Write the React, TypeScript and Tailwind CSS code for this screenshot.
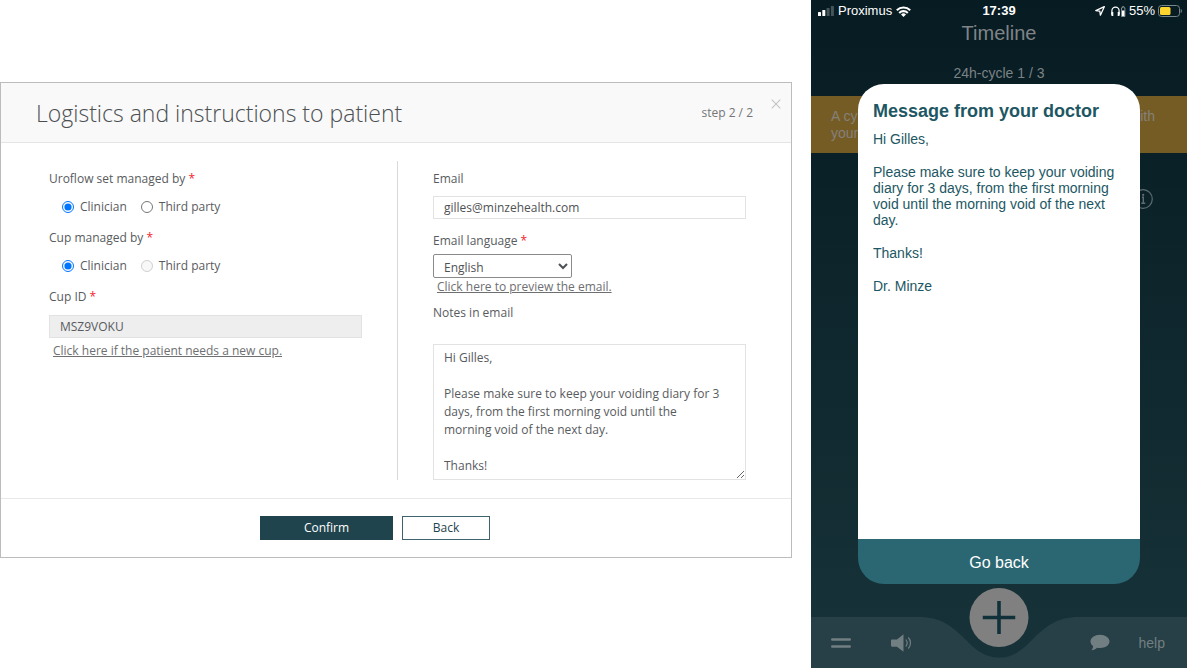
import { useState } from "react";
import type { ReactNode } from "react";

const NOTE = `Hi Gilles,

Please make sure to keep your voiding diary for 3 days, from the first morning void until the morning void of the next day.

Thanks!`;

const MESSAGE = [
  "Hi Gilles,",
  "Please make sure to keep your voiding diary for 3 days, from the first morning void until the morning void of the next day.",
  "Thanks!",
  "Dr. Minze",
];

function Required() {
  return <span className="text-[#f5222d]">*</span>;
}

function RadioRow({
  legend,
  name,
  thirdPartyDisabled = false,
}: {
  legend: string;
  name: string;
  thirdPartyDisabled?: boolean;
}) {
  return (
    <fieldset className="mb-[13px]">
      <legend>
        {legend} <Required />
      </legend>
      <div className="mt-[10px] flex gap-[14px] pl-[13px]">
        <label className="flex items-center gap-[6px]">
          <input type="radio" name={name} defaultChecked className="h-[12px] w-[12px]" />
          Clinician
        </label>
        <label className="flex items-center gap-[6px]">
          <input type="radio" name={name} disabled={thirdPartyDisabled} className="h-[12px] w-[12px]" />
          Third party
        </label>
      </div>
    </fieldset>
  );
}

function TextLink({ children }: { children: ReactNode }) {
  return (
    <a href="#" className="block pl-[4px] text-[#6d6f71] underline">
      {children}
    </a>
  );
}

function LogisticsDialog() {
  const [note, setNote] = useState(NOTE);

  return (
    <section className="mt-[82px] border border-[#bcbcbc] bg-white text-[12px] leading-[18px] text-[#585b5e]">
      {/* Header */}
      <header className="relative flex h-[60px] items-center justify-between border-b border-[#e4e4e4] bg-[#f9f9f9] pl-[35px] pr-[38px]">
        <h1 className="text-[23px] font-light leading-[32px] text-[#4c4f51]">
          Logistics and instructions to patient
        </h1>
        <span className="text-[#747678]">step 2 / 2</span>
        <button aria-label="Close" className="absolute right-[10px] top-[16px]">
          <svg viewBox="0 0 10 10" className="h-[10px] w-[10px]" stroke="#c4c4c4" strokeWidth="1.1">
            <path d="M.7.7l8.6 8.6M9.3.7L.7 9.3" />
          </svg>
        </button>
      </header>

      {/* Form */}
      <div className="grid grid-cols-[397fr_393fr] py-[18px]">
        <div className="border-r border-[#d9d9d9] pl-[48px] pr-[35px] pt-[9px]">
          <RadioRow legend="Uroflow set managed by" name="uroflow" />
          <RadioRow legend="Cup managed by" name="cup" thirdPartyDisabled />
          <label htmlFor="cup-id" className="mb-[9px] block">
            Cup ID <Required />
          </label>
          <input
            id="cup-id"
            readOnly
            defaultValue="MSZ9VOKU"
            className="mb-[4px] block h-[23px] w-full border border-[#e2e2e2] bg-[#eeeeee] px-[10px]"
          />
          <TextLink>Click here if the patient needs a new cup.</TextLink>
        </div>

        <div className="pl-[35px] pr-[45px] pt-[9px]">
          <label htmlFor="email" className="mb-[8px] block">
            Email
          </label>
          <input
            id="email"
            type="email"
            defaultValue="gilles@minzehealth.com"
            className="mb-[13px] block h-[23px] w-full border border-[#e2e2e2] px-[10px] text-[#4f5254]"
          />
          <label htmlFor="language" className="mb-[4px] block">
            Email language <Required />
          </label>
          <select
            id="language"
            className="block h-[24px] w-[139px] rounded-[2px] border border-[#8a8a8a] bg-white pl-[6px] pt-[2px] text-[#4f5254]"
          >
            <option>English</option>
          </select>
          <TextLink>Click here to preview the email.</TextLink>
          <label htmlFor="notes" className="mb-[22px] mt-[8px] block">
            Notes in email
          </label>
          <textarea
            id="notes"
            value={note}
            onChange={(e) => setNote(e.target.value)}
            className="block h-[136px] w-full overflow-hidden border border-[#e2e2e2] pl-[10px] pr-[20px] pt-[4px]"
          />
        </div>
      </div>

      {/* Actions */}
      <footer className="flex justify-center gap-[9px] border-t border-[#e8e8e8] py-[17px] pr-[42px]">
        <button className="h-[24px] w-[133px] border border-[#1f444d] bg-[#1f444d] font-medium text-white">
          Confirm
        </button>
        <button className="h-[24px] w-[88px] border border-[#3d646c] bg-white font-medium text-[#1f444d]">
          Back
        </button>
      </footer>
    </section>
  );
}

function StatusBar() {
  return (
    <div className="relative flex h-[22px] items-center justify-between pl-[7px] pr-[5px] text-[13px] leading-[22px] text-white">
      <div className="flex items-center gap-[4px]">
        <svg viewBox="0 0 16 10" className="h-[10px] w-[16px]" fill="#fff">
          <rect x="0" y="6" width="3" height="4" rx=".6" />
          <rect x="4.300" y="4" width="3" height="6" rx=".6" />
          <rect x="8.600" y="2" width="3" height="8" rx=".6" opacity=".25" />
          <rect x="12.900" y="0" width="3" height="10" rx=".6" opacity=".25" />
        </svg>
        Proximus
        <svg viewBox="0 0 15 11" className="h-[11px] w-[15px]" fill="none" stroke="#fff" strokeWidth="2.100">
          <path d="M.8 4.200a9.600 9.600 0 0 1 13.400 0M3.200 6.900a6.100 6.100 0 0 1 8.600 0" />
          <path d="M7.500 11L5 8.500a3.500 3.500 0 0 1 5 0z" fill="#fff" stroke="none" />
        </svg>
      </div>
      <span className="absolute inset-x-0 text-center font-bold">17:39</span>
      <div className="flex items-center gap-[3px]">
        <svg viewBox="0 0 10 10" className="mr-[2px] h-[10px] w-[10px]" fill="none" stroke="#fff" strokeWidth="1.300" strokeLinejoin="round">
          <path d="M9.300.7L.8 4.600l4 .6.6 4z" />
        </svg>
        <svg viewBox="0 0 16 11" className="h-[11px] w-[16px]" fill="none" stroke="#fff" strokeWidth="1.200">
          <path d="M1.900 8V4.800a3.600 3.600 0 0 1 7.200 0V8" />
          <path d="M3.300 6v4H2.200a1 1 0 0 1-1-1V7a1 1 0 0 1 1-1zM7.700 6v4h1.100a1 1 0 0 0 1-1V7a1 1 0 0 0-1-1z" fill="#fff" stroke="none" />
          <path d="M12.500.6h1.400v1.200h1v8.700h-3.400V1.800h1z" stroke="#9aa6a9" strokeWidth=".8" />
          <path d="M12 4.500h2.500v5.600H12z" fill="#fff" stroke="none" />
        </svg>
        <span>55%</span>
        <svg viewBox="0 0 24 12" className="h-[12px] w-[24px]">
          <rect x=".5" y=".5" width="21" height="11" rx="3" fill="none" stroke="#77868a" />
          <rect x="2" y="2" width="10.500" height="8" rx="1.500" fill="#ffd52e" />
          <path d="M22.700 4v4c.9-.4 1.200-1.100 1.200-2s-.3-1.600-1.200-2z" fill="#77868a" />
        </svg>
      </div>
    </div>
  );
}

function BottomNav() {
  return (
    <nav className="relative mt-auto flex h-[51px] items-center text-[#727f82]">
      <svg viewBox="0 0 376 51" preserveAspectRatio="none" className="absolute inset-0 h-full w-full" fill="#273f46">
        <path d="M0 0H108C130 0 141 9 154 22C166 34 174 40.500 188 40.500C202 40.500 210 34 222 22C235 9 246 0 268 0H376V51H0Z" />
      </svg>
      <button
        aria-label="Add"
        className="absolute -top-[29px] left-1/2 flex h-[59px] w-[59px] -translate-x-1/2 items-center justify-center rounded-full bg-[#808080]"
      >
        <svg viewBox="0 0 33 33" className="h-[33px] w-[33px]" stroke="#11313a" strokeWidth="3.600">
          <path d="M16.500 0v33M0 16.500h33" />
        </svg>
      </button>
      <div className="relative flex w-full items-center justify-between pl-[20px] pr-[22px]">
        <div className="flex items-center gap-[40px]">
          <button aria-label="Menu">
            <svg viewBox="0 0 20 10" className="h-[10px] w-[20px]" stroke="currentColor" strokeWidth="2.600" strokeLinecap="round">
              <path d="M1.300 1.500h17.400M1.300 8.500h17.400" />
            </svg>
          </button>
          <button aria-label="Sound">
            <svg viewBox="0 0 22 18" className="h-[18px] w-[22px]" fill="currentColor">
              <path d="M1.200 5.500H6L12.500.3v17.400L6 12.800H1.200C.5 12.800 0 12.300 0 11.600V6.700c0-.7.5-1.200 1.200-1.200z" />
              <path d="M14.800 5.500c1.600 2 1.600 5 0 7M17.300 3.500c2.900 3 2.900 8 0 11" fill="none" stroke="currentColor" strokeWidth="1.200" />
            </svg>
          </button>
        </div>
        <div className="flex items-center gap-[29px]">
          <button aria-label="Chat">
            <svg viewBox="0 0 20 17" className="h-[17px] w-[20px]" fill="currentColor">
              <path d="M10 .8c5.300 0 9.500 3 9.500 6.700S15.300 14 10 14c-1 0-2-.1-2.900-.3C5.600 15.200 3.700 16.200 1.500 16.300c1-1.200 1.600-2.700 1.600-4.200C1.500 11 .5 9.400.5 7.500.5 3.800 4.700.8 10 .8z" />
            </svg>
          </button>
          <button className="text-[14px] leading-[18px]">help</button>
        </div>
      </div>
    </nav>
  );
}

function PhonePreview() {
  return (
    <section className="relative flex min-h-screen w-[376px] shrink-0 flex-col bg-linear-to-b from-[#071b22] to-[#173339] font-['Liberation_Sans',Arial,sans-serif]">
      <StatusBar />
      <h2 className="text-center text-[20px] leading-[22px] text-[#808487]">Timeline</h2>
      <p className="mt-[20px] text-center text-[14px] leading-[18px] text-[#7c8386]">24h-cycle 1 / 3</p>
      <div className="mt-[14px] flex h-[57px] justify-between bg-[#755c25] pl-[20px] pr-[32px] pt-[12px] text-[14px] leading-[17px] text-[#85807a]">
        <p>
          A cy
          <br />
          your
        </p>
        <p>ith</p>
      </div>
      <div className="mt-[36px] flex justify-end pr-[34px]">
        <svg viewBox="0 0 20 20" className="h-[20px] w-[20px]" fill="none" stroke="#5d6c70" strokeWidth="1.200">
          <circle cx="10" cy="10" r="9.300" />
          <path d="M9 8.300h1.300v5.800M8.300 14.300h4" strokeWidth="1.400" />
          <circle cx="10.200" cy="5.900" r="1.100" fill="#5d6c70" stroke="none" />
        </svg>
      </div>
      <BottomNav />

      {/* Doctor message, over the timeline */}
      <div
        role="dialog"
        aria-labelledby="message-title"
        className="absolute inset-x-[47px] bottom-[84px] top-[84px] flex flex-col text-[#1d5763]"
      >
        <div className="flex-1 rounded-t-[26px] bg-white px-[15px] pt-[15px]">
          <h2 id="message-title" className="text-[18px] font-bold leading-[24px]">
            Message from your doctor
          </h2>
          <div className="mt-[8px] flex flex-col gap-[17px] text-[14px] leading-[16px]">
            {MESSAGE.map((line) => (
              <p key={line}>{line}</p>
            ))}
          </div>
        </div>
        <button className="h-[45px] rounded-b-[26px] bg-[#2b6773] pt-[3px] text-[16px] leading-[24px] text-white">
          Go back
        </button>
      </div>
    </section>
  );
}

export default function App() {
  return (
    <main className="flex min-h-screen gap-[19px] bg-white font-['Open_Sans',sans-serif]">
      <div className="min-w-0 flex-1">
        <LogisticsDialog />
      </div>
      <PhonePreview />
    </main>
  );
}
